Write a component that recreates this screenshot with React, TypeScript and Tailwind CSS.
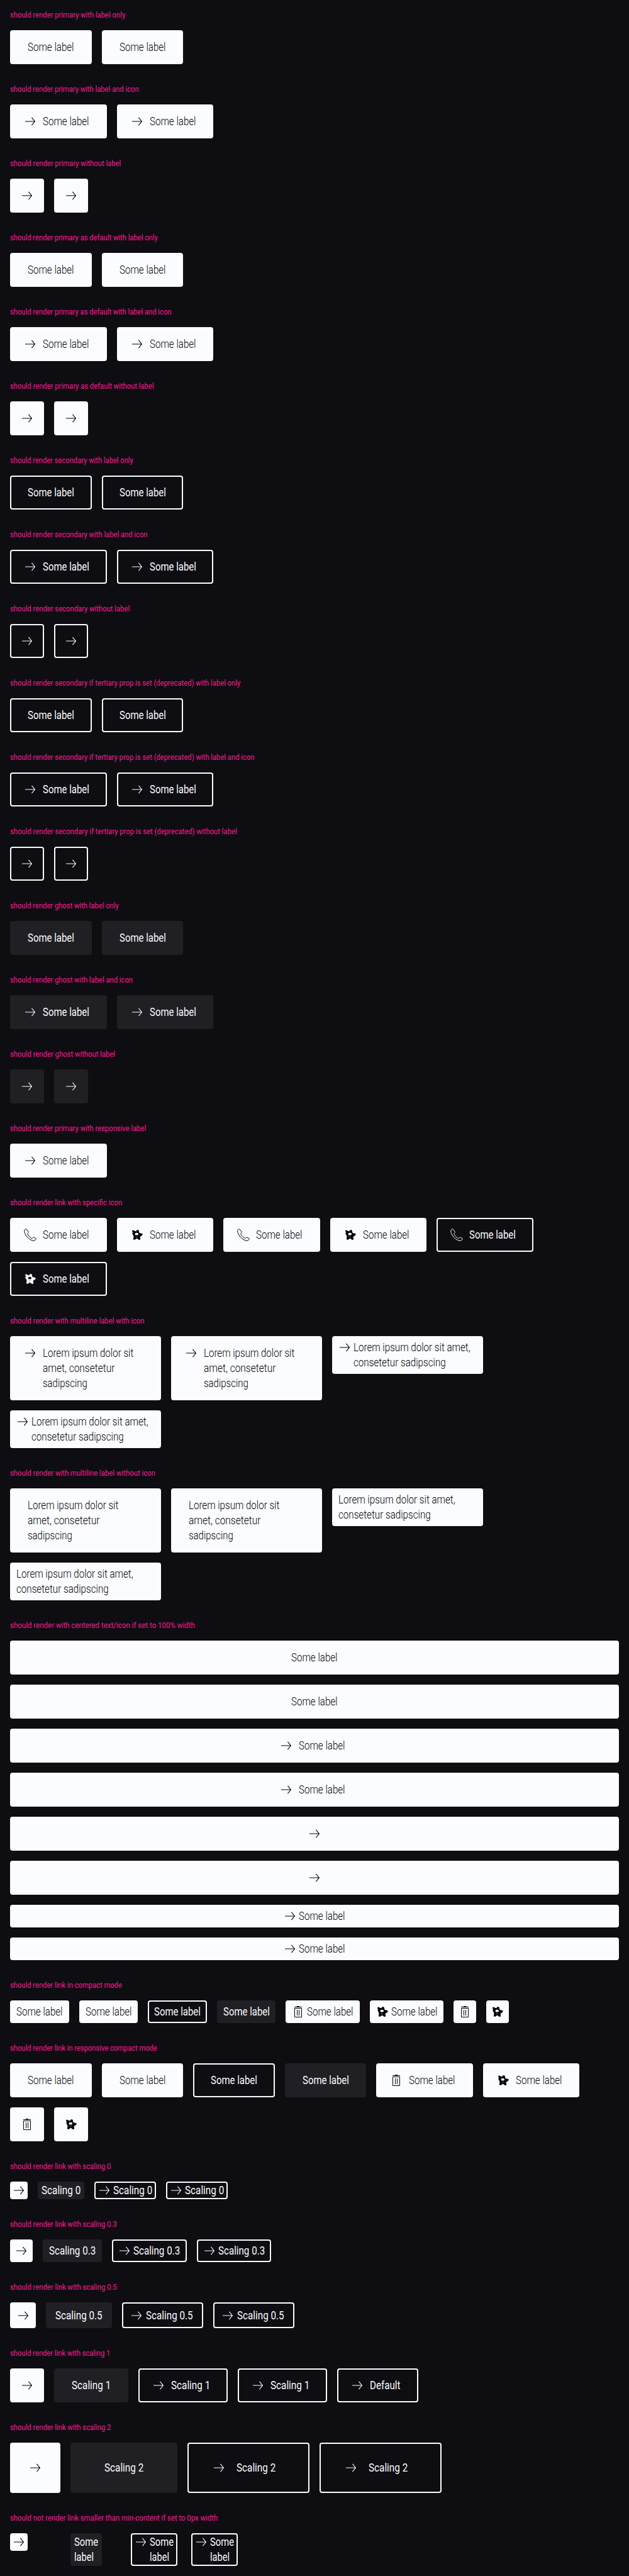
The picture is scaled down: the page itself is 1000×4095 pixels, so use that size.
import { useLayoutEffect, useRef, useState } from 'react';
import type { ReactNode } from 'react';

/* Condenses a line of text to a given advance width. */
function Line({ text, w }: { text: string; w: number }) {
  const ref = useRef<HTMLSpanElement>(null);
  const [k, setK] = useState(1);
  useLayoutEffect(() => {
    if (ref.current) setK(w / ref.current.offsetWidth);
  }, [text, w]);
  return (
    <span className="block whitespace-nowrap" style={{ width: w }}>
      <span ref={ref} className="inline-block origin-left align-top" style={{ transform: `scaleX(${k})` }}>
        {text}
      </span>
    </span>
  );
}

type IconName = 'arrow' | 'phone' | 'trash' | 'star';

function Icon({ name }: { name: IconName }) {
  return (
    <svg viewBox="0 0 24 24" className="size-6 shrink-0" fill="none" stroke="currentColor" strokeWidth="1">
      {name === 'arrow' && <path d="M4 12h15.3M14.4 5.9 19.4 12l-5 6.1" strokeWidth="1.1" />}
      {name === 'phone' && (
        <path d="M4.6 2.9C2.4 4.3 2.4 7 3.5 9.6c2 4.8 5.7 8.7 10.4 10.9 2.9 1.3 5.6 1.1 7.3-1.4.3-.5.2-.9-.2-1.2l-3-1.9c-.5-.3-1-.2-1.4.2l-1.2 1.2c-.4.4-.8.4-1.3.1-2.7-1.6-4.8-3.9-6.2-6.6-.2-.5-.2-.9.2-1.3L9 8.4c.4-.4.4-.9.1-1.4L6.2 3.2c-.4-.5-1-.6-1.6-.3z" />
      )}
      {name === 'trash' && (
        <>
          <path d="M10 3.5h4M6 4.5h12M10.5 9v9M13.5 9v9" />
          <path d="M6.5 6.5h11v14h-11z" />
        </>
      )}
      {name === 'star' && (
        <path
          fill="currentColor"
          stroke="none"
          fillRule="evenodd"
          d="M4.2 5.2c.4-.9 1.3-.8 2.2-.3l2.8 1.3c.6.2 1 0 1.4-.5.7-.9 1.4-1.7 2.4-1.7 1.3 0 1.7 1 1.9 2.1l.4 2.2c.1.6.5.9 1.2 1l2.7.4c1 .2 1.6.8 1.5 1.8-.1.9-.9 1.4-1.7 1.9l-1.7 1c-.7.4-.8.9-.6 1.6l.4 2c.2 1.3-.5 2-1.5 2-.8 0-1.5-.5-2.2-1.1l-1-.9c-.5-.4-.9-.4-1.5-.1l-1.8 1.3c-.9.6-2 .9-2.7.3-.7-.6-.5-1.6-.3-2.5l.4-2.3c.1-.6-.1-1-.5-1.5L4.8 11.1c-.6-.9-.5-1.7 0-2.4.2-.4.1-.8-.1-1.2-.4-.8-.8-1.5-.5-2.3zM10.5 8.8c-1.400.2-2 1.300-1.800 2.500.2 1 1 1.600 1.900 1.500l.8-1.100.8 1c1-.1 1.800-.8 1.800-1.900 0-1.400-1.400-2.300-3.500-2zM9 14.5c1.600.7 3.100.4 4.300-.5-.9 1.700-3.100 2-4.300.5z"
        />
      )}
    </svg>
  );
}

type Size = 's0' | 's3' | 's5' | 's10' | 's20';
type Variant = 'p' | 's' | 'g';

const variants: Record<Variant, string> = {
  p: 'bg-[#fbfcff] text-[#010205] font-[350]',
  s: 'text-[#fbfcff] ring-2 ring-inset ring-[#fbfcff] font-[450]',
  g: 'bg-[#202024] text-[#fbfcff] font-[450]',
};
const padOnly: Record<Size, string> = { s0: 'p-0.5', s3: 'p-1.5', s5: 'p-[8.5px]', s10: 'p-[15px]', s20: 'p-7' };
const padLabel: Record<Size, string> = {
  s0: 'py-0.5 px-1.5',
  s3: 'py-1.5 px-2.5',
  s5: 'py-[8.5px] px-[15px]',
  s10: 'py-[15px] px-7',
  s20: 'py-7 px-[54px]',
};
const padIcon: Record<Size, string> = {
  s0: 'py-0.5 pl-1 pr-1.5 gap-0.5',
  s3: 'py-1.5 pl-2 pr-2.5 gap-0.5',
  s5: 'py-[8.5px] pl-[11px] pr-[15.5px] gap-[3.5px]',
  s10: 'py-[15px] pl-5 pr-7 gap-2',
  s20: 'py-7 pl-[38px] pr-[54px] gap-4',
};

type Text = [string, number][];
const some: Text = [['Some label', 73.5]];
const stacked: Text = [['Some', 38], ['label', 31]];
const long3: Text = [['Lorem ipsum dolor sit', 144], ['amet, consetetur', 114], ['sadipscing', 71]];
const long2: Text = [['Lorem ipsum dolor sit amet,', 186], ['consetetur sadipscing', 146.5]];

type LinkProps = { v?: Variant; s?: Size; icon?: IconName; text?: Text; extra?: string };

function Link({ v = 'p', s = 's10', icon, text, extra = '' }: LinkProps) {
  const pad = text ? (icon ? padIcon[s] : padLabel[s]) : padOnly[s];
  return (
    <a className={`flex items-start rounded-[4px] text-[17.5px] leading-6 ${variants[v]} ${pad} ${extra}`}>
      {icon && <Icon name={icon} />}
      {text && (
        <span className="block">
          {text.map(([t, w]) => (
            <Line key={t} text={t} w={w} />
          ))}
        </span>
      )}
    </a>
  );
}

function Section({ title, w, children }: { title: string; w: number; children: ReactNode }) {
  return (
    <section className="p-4">
      <h2 className="mb-4 h-4 text-[13.4px] leading-[15px] text-[#ff1493]">
        <Line text={title} w={w} />
      </h2>
      <div className="flex flex-wrap items-start gap-4">{children}</div>
    </section>
  );
}

const basics: { title: string; w: number; v: Variant; text?: Text; icon?: IconName }[] = [
  { title: 'should render primary with label only', w: 183, v: 'p', text: some },
  { title: 'should render primary with label and icon', w: 205, v: 'p', text: some, icon: 'arrow' },
  { title: 'should render primary without label', w: 176.5, v: 'p', icon: 'arrow' },
  { title: 'should render primary as default with label only', w: 235, v: 'p', text: some },
  { title: 'should render primary as default with label and icon', w: 256.5, v: 'p', text: some, icon: 'arrow' },
  { title: 'should render primary as default without label', w: 228.5, v: 'p', icon: 'arrow' },
  { title: 'should render secondary with label only', w: 196, v: 's', text: some },
  { title: 'should render secondary with label and icon', w: 218.5, v: 's', text: some, icon: 'arrow' },
  { title: 'should render secondary without label', w: 190, v: 's', icon: 'arrow' },
  { title: 'should render secondary if tertiary prop is set (deprecated) with label only', w: 366.5, v: 's', text: some },
  {
    title: 'should render secondary if tertiary prop is set (deprecated) with label and icon',
    w: 388.5,
    v: 's',
    text: some,
    icon: 'arrow',
  },
  { title: 'should render secondary if tertiary prop is set (deprecated) without label', w: 360.5, v: 's', icon: 'arrow' },
  { title: 'should render ghost with label only', w: 173, v: 'g', text: some },
  { title: 'should render ghost with label and icon', w: 195, v: 'g', text: some, icon: 'arrow' },
  { title: 'should render ghost without label', w: 167, v: 'g', icon: 'arrow' },
];

const scalings: { n: string; s: Size; w: number; tw: number }[] = [
  { n: '0', s: 's0', w: 160.5, tw: 62 },
  { n: '0.3', s: 's3', w: 170, tw: 74.4 },
  { n: '0.5', s: 's5', w: 170, tw: 74.9 },
  { n: '1', s: 's10', w: 159.5, tw: 62 },
  { n: '2', s: 's20', w: 160.5, tw: 62 },
];

export default function App() {
  const full = 'w-full justify-center';
  return (
    <main className="min-h-[4095px] w-[1000px] bg-[#0e0e12] font-['Roboto',sans-serif]">
      {basics.map(({ title, w, ...link }) => (
        <Section key={title} title={title} w={w}>
          <Link {...link} />
          <Link {...link} />
        </Section>
      ))}

      <Section title="should render primary with responsive label" w={216}>
        <Link icon="arrow" text={some} />
      </Section>

      <Section title="should render link with specific icon" w={178}>
        <Link icon="phone" text={some} />
        <Link icon="star" text={some} />
        <Link icon="phone" text={some} />
        <Link icon="star" text={some} />
        <Link v="s" icon="phone" text={some} />
        <Link v="s" icon="star" text={some} />
      </Section>

      <Section title="should render with multiline label with icon" w={213.5}>
        <Link icon="arrow" text={long3} extra="w-60" />
        <Link icon="arrow" text={long3} extra="w-60" />
        <Link s="s3" icon="arrow" text={long2} extra="w-60" />
        <Link s="s3" icon="arrow" text={long2} extra="w-60" />
      </Section>

      <Section title="should render with multiline label without icon" w={230.5}>
        <Link text={long3} extra="w-60" />
        <Link text={long3} extra="w-60" />
        <Link s="s3" text={long2} extra="w-60" />
        <Link s="s3" text={long2} extra="w-60" />
      </Section>

      <Section title="should render with centered text/icon if set to 100% width" w={294}>
        <Link text={some} extra={full} />
        <Link text={some} extra={full} />
        <Link icon="arrow" text={some} extra={full} />
        <Link icon="arrow" text={some} extra={full} />
        <Link icon="arrow" extra={full} />
        <Link icon="arrow" extra={full} />
        <Link s="s3" icon="arrow" text={some} extra={full} />
        <Link s="s3" icon="arrow" text={some} extra={full} />
      </Section>

      <Section title="should render link in compact mode" w={178}>
        <Link s="s3" text={some} />
        <Link s="s3" text={some} />
        <Link s="s3" v="s" text={some} />
        <Link s="s3" v="g" text={some} />
        <Link s="s3" icon="trash" text={some} />
        <Link s="s3" icon="star" text={some} />
        <Link s="s3" icon="trash" />
        <Link s="s3" icon="star" />
      </Section>

      <Section title="should render link in responsive compact mode" w={234}>
        <Link text={some} />
        <Link text={some} />
        <Link v="s" text={some} />
        <Link v="g" text={some} />
        <Link icon="trash" text={some} />
        <Link icon="star" text={some} />
        <Link icon="trash" />
        <Link icon="star" />
      </Section>

      {scalings.map(({ n, s, w, tw }) => (
        <Section key={n} title={`should render link with scaling ${n}`} w={w}>
          <Link s={s} icon="arrow" />
          <Link s={s} v="g" text={[[`Scaling ${n}`, tw]]} />
          <Link s={s} v="s" icon="arrow" text={[[`Scaling ${n}`, tw]]} />
          <Link s={s} v="s" icon="arrow" text={[[`Scaling ${n}`, tw]]} />
          {n === '1' && <Link v="s" icon="arrow" text={[['Default', 48.5]]} />}
        </Section>
      ))}

      <Section title="should not render link smaller than min-content if set to 0px width" w={330}>
        <div className="flex w-20 items-start">
          <Link s="s0" icon="arrow" />
        </div>
        <div className="flex w-20 items-start">
          <Link s="s0" v="g" text={stacked} />
        </div>
        <div className="flex w-20 items-start">
          <Link s="s0" v="s" icon="arrow" text={stacked} />
        </div>
        <div className="flex w-20 items-start">
          <Link s="s0" v="s" icon="arrow" text={stacked} />
        </div>
      </Section>
    </main>
  );
}
